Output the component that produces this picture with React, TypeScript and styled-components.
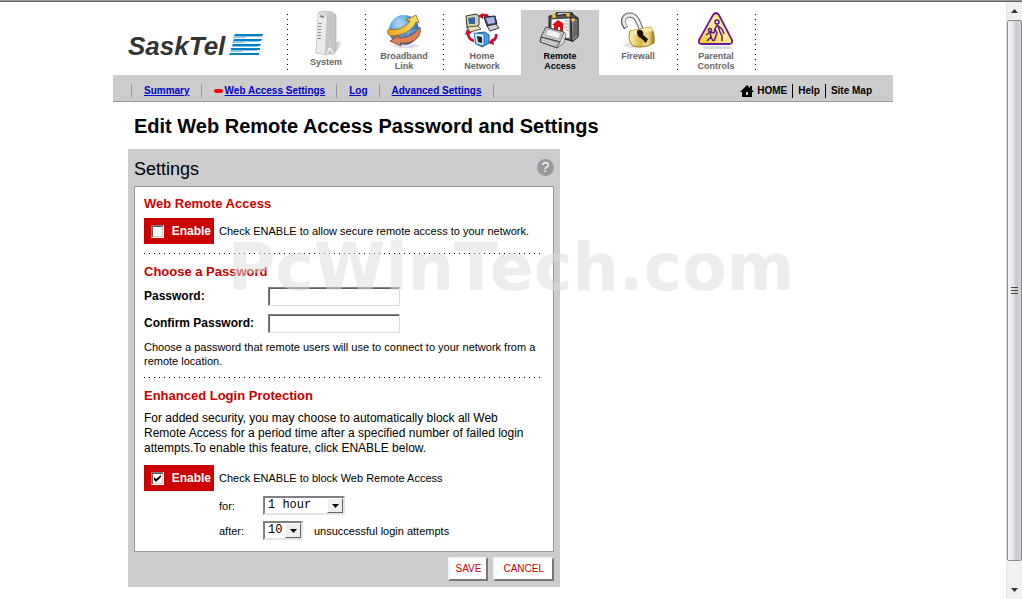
import React from "react";
import styled, { createGlobalStyle } from "styled-components";

const sans = `"Liberation Sans", Arial, sans-serif`;

const GlobalStyle = createGlobalStyle`
  *, *::before, *::after { box-sizing: border-box; }
  body { margin: 0; background: #fff; color: #000; font: 12px/15px ${sans}; }
  h1, h2, h3, p { margin: 0; }
`;

const Frame = styled.div`
  position: relative;
  display: grid;
  grid-template-columns: minmax(0, 1fr) 16px;
  min-height: 100vh;
  border-top: 1px solid #999;
  box-shadow: inset 0 1px 0 #666;
`;

const Page = styled.div`
  width: 100%;
  max-width: 780px;
  margin: 0 auto;
  padding-top: 9px;
`;

const Header = styled.header`
  display: flex;
  justify-content: space-between;
  padding-right: 138px;
`;

const Brand = styled.a`
  display: block;
  padding: 22px 0 0 14px;
`;

const Tabs = styled.nav`
  display: flex;
`;

const dotsDown = `repeating-linear-gradient(to bottom, #000 0 1px, transparent 1px 5px)`;

const Tab = styled.a<{ $active?: boolean; $plain?: boolean; $last?: boolean }>`
  position: relative;
  display: flex;
  flex-direction: column;
  align-items: center;
  width: 78px;
  height: 65px;
  background: ${(p) => (p.$active ? "#ccc" : "transparent")};
  color: ${(p) => (p.$active ? "#000" : "#666")};
  font: bold 9px/10px ${sans};
  text-align: center;
  text-decoration: none;

  &::before, &::after {
    content: "";
    position: absolute;
    top: 4px;
    width: 1px;
    height: 56px;
  }
  &::before {
    left: 0;
    background: ${(p) => (p.$active || p.$plain ? "none" : dotsDown)};
  }
  &::after {
    right: -1px;
    background: ${(p) => (p.$last ? dotsDown : "none")};
  }
`;

const TabLabel = styled.span`
  width: 50px;
`;

const SubBar = styled.div`
  display: flex;
  align-items: center;
  justify-content: space-between;
  height: 27px;
  padding: 5px 21px 0 18px;
  background: #ccc;
  border-bottom: 1px solid #999;
  font: bold 10px/14px ${sans};
`;

const SubList = styled.ul`
  display: flex;
  margin: 0;
  padding: 0;
  list-style: none;
`;

const SubItem = styled.li`
  display: flex;
  align-items: center;
  gap: 2px;
  padding: 0 11px 0 12px;
  border-left: 1px solid #999;
  &:last-child { border-right: 1px solid #999; }
`;

const SubLink = styled.a`
  color: #0000cc;
`;

const CurrentMark = styled.i`
  width: 9px;
  height: 4px;
  border-radius: 2px;
  background: #f00;
`;

const Utility = styled.nav`
  display: flex;
`;

const UtilityLink = styled.a`
  display: flex;
  align-items: center;
  gap: 3px;
  padding: 0 5px;
  color: #000;
  text-decoration: none;
  & + & { border-left: 1px solid #000; }
  &:last-child { padding-right: 0; }
`;

const Title = styled.h1`
  padding: 10px 0 9px 21px;
  font: bold 20px/28px ${sans};
`;

const Panel = styled.form`
  width: 432px;
  max-width: 100%;
  margin-left: 15px;
  padding: 0 6px 6px;
  background: #ccc;
`;

const PanelHead = styled.div`
  display: flex;
  align-items: center;
  justify-content: space-between;
  height: 37px;
`;

const PanelTitle = styled.h2`
  padding-top: 2px;
  font: 18px/24px ${sans};
`;

const HelpButton = styled.button`
  width: 17px;
  height: 17px;
  padding: 0;
  border: 0;
  border-radius: 50%;
  background: #999;
  color: #fff;
  font: 14px/17px ${sans};
`;

const PanelBody = styled.div`
  padding: 8px 12px 10px 9px;
  background: #fff;
  border: 1px solid #999;
`;

const SectionTitle = styled.h3`
  color: #c00;
  font: bold 13px/18px ${sans};
`;

const Rule = styled.hr`
  height: 1px;
  margin: 9px 0;
  border: 0;
  background: repeating-linear-gradient(to right, #000 0 1px, transparent 1px 5px);
`;

const EnableRow = styled.div`
  display: flex;
  align-items: center;
  gap: 5px;
  margin-top: 5px;
  font-size: 11px;
`;

const EnableBox = styled.label`
  display: flex;
  align-items: center;
  justify-content: space-between;
  width: 70px;
  height: 26px;
  padding: 0 3px 0 7px;
  background: #c00;
  color: #fff;
  font: bold 12px/15px ${sans};
`;

const Check = styled.input`
  appearance: none;
  width: 13px;
  height: 13px;
  margin: 0;
  border: 1px solid;
  border-color: #808080 #fff #fff #808080;
  background: #fff;
  box-shadow: inset 1px 1px 0 #606060, inset -1px -1px 0 #d4d0c8;
  &:checked {
    background: #fff url("data:image/svg+xml,%3Csvg xmlns='http://www.w3.org/2000/svg' viewBox='0 0 11 11'%3E%3Cpath d='M2 4v3l2 2 5-5V2L4 6z'/%3E%3C/svg%3E") center / 11px 11px no-repeat;
  }
`;

const Fields = styled.div`
  display: grid;
  gap: 8px;
  padding-top: 6px;
`;

const Field = styled.div`
  display: flex;
  align-items: center;
  height: 19px;
`;

const FieldLabel = styled.label`
  width: 124px;
  font-weight: bold;
`;

const TextBox = styled.input`
  width: 132px;
  height: 19px;
  padding: 1px 3px;
  border: 1px solid;
  border-color: #808080 #ddd #ddd #808080;
  background: #fff;
  box-shadow: inset 1px 1px 0 #606060;
  font: 12px/15px ${sans};
`;

const Hint = styled.p`
  margin-top: 7px;
  font-size: 11px;
  line-height: 14px;
`;

const Copy = styled.p`
  margin: 6px 0 9px;
`;

const OptionRow = styled.div`
  display: flex;
  align-items: center;
  height: 20px;
  margin-top: 5px;
  padding-left: 75px;
  font-size: 11px;
`;

const OptionLabel = styled.label`
  width: 44px;
`;

const SelectWrap = styled.span<{ $width: number }>`
  position: relative;
  width: ${(p) => p.$width}px;
  height: 20px;
  margin-right: 11px;
`;

const SelectBox = styled.select`
  appearance: none;
  width: 100%;
  height: 19px;
  padding: 0 0 0 3px;
  border: 2px solid;
  border-color: #808080 #e4e4e4 #e4e4e4 #808080;
  border-radius: 0;
  background: #fff;
  color: #000;
  font: 12px/15px "Liberation Mono", monospace;
`;

const Arrow = styled.span`
  position: absolute;
  top: 2px;
  right: 2px;
  display: grid;
  place-items: center;
  width: 16px;
  height: 15px;
  background: #eee;
  border: 1px solid;
  border-color: #fff #666 #666 #fff;
  pointer-events: none;
`;

const Actions = styled.div`
  display: flex;
  justify-content: flex-end;
  gap: 5px;
  padding-top: 5px;
`;

const ActionButton = styled.button`
  height: 24px;
  padding: 0 5px;
  border: 2px solid;
  border-color: #f4f4f4 #777 #777 #f4f4f4;
  background: #fff;
  color: #c00;
  font: 10px/18px ${sans};
  &:last-child { padding: 0 8px; }
`;

const Watermark = styled.div`
  position: absolute;
  top: 230px;
  left: 0;
  right: 0;
  text-align: center;
  color: rgba(220, 220, 220, 0.5);
  font: bold 65px/74px "DejaVu Sans", sans-serif;
  pointer-events: none;
`;

const ScrollTrack = styled.div`
  display: flex;
  flex-direction: column;
  margin-top: 1px;
  background: #f0f0f0;
  border-left: 1px solid #e4e4e4;
`;

const ScrollArrow = styled.span`
  display: grid;
  place-items: center;
  height: 18px;
`;

const ScrollThumb = styled.span`
  display: grid;
  place-items: center;
  flex: 1;
  margin-bottom: 20px;
  border: 1px solid #8c8c8c;
  border-radius: 2px;
  background: linear-gradient(to right, #f4f4f4, #e6e6e8 40%, #c8c8ce 60%, #d2d2d8);
`;

const Logo = () => (
  <svg width="138" height="30" viewBox="0 0 138 30" role="img" aria-label="SaskTel">
    <text x="1" y="23" fill="#333" fontFamily="Liberation Sans, Arial, sans-serif" fontSize="26" fontWeight="bold" fontStyle="italic">SaskTel</text>
    <path fill="#0080c4" d="M108 2h28v1l-1 1h-28zM107 7h28l-1 2h-28zM106 12h28l-1 2h-28zM104 16h29v2h-29zM103 21h29v2h-30z" />
    <path fill="#0080c4" d="M120 4h15v1h-15zM118 9h14v1h-14zM117 14h14v1h-14zM116 18h14v1h-14z" opacity=".45" />
    <path fill="#8cc8e6" d="M107 4h14l-3 2h-12zM106 9h14l-3 2h-12zM105 14h14l-3 1h-12zM104 18h14l-3 2h-12z" />
  </svg>
);

const SystemIcon = () => (
  <svg width="36" height="47" viewBox="0 0 36 47">
    <defs>
      <linearGradient id="router" x1="0" x2="1"><stop offset="0" stopColor="#f0f0f0" /><stop offset="1" stopColor="#bbb" /></linearGradient>
      <linearGradient id="shade" x1="0" x2="1"><stop offset="0" stopColor="#aaa" /><stop offset="1" stopColor="#fff" /></linearGradient>
    </defs>
    <path d="M24 43l2-10 6-2 3 2-7 9z" fill="url(#shade)" />
    <path d="M11 2q6-2 13 0l4 3v36l-5 3-15-1z" fill="url(#router)" stroke="#b4b4b4" strokeWidth=".7" />
    <path d="M19 3l6 0q2 1 2 3v34l-6 4h-3z" fill="#c6c6c6" />
    <path d="M10 3l8 2q1 1 1 3l-2 37-9-3z" fill="#ececec" stroke="#bcbcbc" strokeWidth=".6" />
    <path d="M12 6l4 1" stroke="#888" strokeWidth="2" />
    <path d="M12 13l-1 17" stroke="#888" strokeWidth="3" strokeDasharray="1 2" />
    <path d="M17 44l4-8 2 1 4 6-2 2-3-4-3 4z" fill="#eaeaea" stroke="#aaa" strokeWidth=".7" />
  </svg>
);

const BroadbandIcon = () => (
  <svg width="36" height="36" viewBox="0 0 36 36">
    <defs>
      <radialGradient id="globe" cx=".35" cy=".3" r=".8"><stop offset="0" stopColor="#bfe4fb" /><stop offset=".5" stopColor="#4a98dd" /><stop offset="1" stopColor="#1a4f9c" /></radialGradient>
      <linearGradient id="gold" x1="0" x2="1"><stop offset="0" stopColor="#e8a020" /><stop offset="1" stopColor="#ffe66a" /></linearGradient>
    </defs>
    <ellipse cx="20" cy="33" rx="13" ry="2" fill="#dde" />
    <circle cx="18" cy="17" r="15" fill="url(#globe)" />
    <path d="M6 8q12 6 24 0M3 16q14 8 30 0M18 2q-11 14-1 30M18 2q10 14 0 30" fill="none" stroke="#8cc4ee" strokeWidth=".7" />
    <path d="M3 16c-3 3-1 7 3 7 10 0 21-6 24-14l3 1-3-8-10 5 4 1C20 14 12 18 3 16z" fill="url(#gold)" stroke="#8c5a10" strokeWidth=".8" />
    <path d="M34 14c2 9-5 15-13 16l-7 0 1 3-11-5 9-6 0 3c9 0 16-4 21-11z" fill="#dc8058" stroke="#7c3a20" strokeWidth=".8" />
  </svg>
);

const NetworkIcon = () => (
  <svg width="36" height="36" viewBox="0 0 36 36">
    <g fill="none" stroke="#cc0a2c" strokeWidth="2.6">
      <path d="M17 3q4-2 7 0M4 20q0 6 6 8M32 21q1 6-5 7" />
    </g>
    <path d="M14 3l5-3v6zM1 22l2-6 5 4zM30 32l-6-2 5-5z" fill="#cc0a2c" />
    <path d="M2 3l10-2 3 2v9l-4 3H3z" fill="#d8d2a8" stroke="#333" />
    <path d="M4 5l7-1v7H5z" fill="#3864a8" />
    <path d="M3 14l11-1 3 3-11 3z" fill="#e8e2b8" stroke="#333" strokeWidth=".8" />
    <path d="M20 4l11-1 2 8-10 2z" fill="#444c70" stroke="#222" />
    <path d="M22 5l8-1 1 6-7 1z" fill="#a8b8e0" />
    <path d="M23 13l9-2 3 4-9 3z" fill="#c8ccd8" stroke="#222" strokeWidth=".9" />
    <path d="M13 20l8-1 4 3v8l-7 4-7-4z" fill="#48a0e0" stroke="#1a5a98" />
    <path d="M10 20l10 1v12l-8-2z" fill="#d4eeff" stroke="#2474b8" />
    <path d="M13 23l5 1v6l-4-1z" fill="#223" />
  </svg>
);

const RemoteIcon = () => (
  <svg width="42" height="37" viewBox="0 0 42 37">
    <path d="M16 3l3-3h13l2 3" fill="none" stroke="#222" strokeWidth="1.6" />
    <path d="M10 4l23-2 6 4v18l-5 5-24-5z" fill="#555" stroke="#1a1a1a" />
    <path d="M32 5l7 2v18l-6 5z" fill="#8c8c8c" stroke="#222" />
    <path d="M35 8v18M37 8v16" stroke="#444" />
    <circle cx="15" cy="4" r="2" fill="#f5c030" /><circle cx="34" cy="8" r="1.800" fill="#f5c030" /><circle cx="29" cy="3" r="1.800" fill="#f5c030" />
    <path d="M12 7l19-1v21l-19-4z" fill="#f4f4f4" stroke="#333" strokeWidth=".8" />
    <path d="M13 13l6-5 6 4-1 1v6h-3v-4h-2v4h-4v-6z" fill="#e00a14" />
    <path d="M26 9h4M26 12h4M26 15h4M26 18h4" stroke="#aaa" />
    <path d="M7 15l18 5-3 10-20-5z" fill="#ccc" stroke="#444" />
    <path d="M9 17l13 4-2 6-14-4z" fill="#f0f0f0" stroke="#888" strokeWidth=".6" />
    <path d="M2 25l19 5-3 6-17-6z" fill="#b4b4b4" stroke="#444" />
    <path d="M4 27l13 5M3 29l12 4" stroke="#eee" strokeDasharray="2 1" />
    <path d="M21 30l4-10 2 2-2 9-7 5z" fill="#ddd" stroke="#555" strokeWidth=".7" />
  </svg>
);

const FirewallIcon = () => (
  <svg width="36" height="37" viewBox="0 0 36 37">
    <defs>
      <linearGradient id="brass" x1="0" x2="1"><stop offset="0" stopColor="#fff6c0" /><stop offset=".45" stopColor="#d9b546" /><stop offset=".75" stopColor="#f5e398" /><stop offset="1" stopColor="#9c7418" /></linearGradient>
    </defs>
    <ellipse cx="14" cy="33" rx="11" ry="3" fill="#e4e4e4" />
    <path d="M6 16C0 8 5 3 10 3c6 0 8 6 11 14" fill="none" stroke="#666" strokeWidth="5" />
    <path d="M6 15C1 8 5 3 10 3c6 0 8 6 11 14" fill="none" stroke="#e8e8e8" strokeWidth="3" />
    <path d="M10 19l21-4q4 6 3 16-10 6-21 3-6-6-3-15z" fill="url(#brass)" stroke="#9a7a28" />
    <path d="M10 19l21-4 2 4-21 4z" fill="#f8e9a6" />
    <path d="M18 18c4-1 6 2 5 5l5 4-2 4-5-5c-4-1-5-7-3-8z" fill="#181008" />
  </svg>
);

const ParentalIcon = () => (
  <svg width="36" height="37" viewBox="0 0 36 37">
    <defs>
      <linearGradient id="sign" x1="0" y1="1" x2="1" y2="0"><stop offset="0" stopColor="#f0cc28" /><stop offset=".6" stopColor="#fff0a0" /><stop offset="1" stopColor="#eec020" /></linearGradient>
    </defs>
    <path d="M4 34h28l3 3H6z" fill="#ddd" />
    <path d="M15 3q3-4 6 0l13 25q1 4-3 4H4q-4 0-3-4z" fill="url(#sign)" stroke="#6a1a96" strokeWidth="1.8" />
    <g fill="none" stroke="#5a1a8c" strokeWidth="1.500">
      <circle cx="19" cy="10" r="2" /><circle cx="12" cy="18" r="1.600" />
      <path d="M19 13l-2 4 2 4-3 8M19 13l5 4 2 5M20 14l2 6 2 4v5M17 17l-1 4M12 20l-4 3M12 20l1 5-4 4M13 25l2 4M12 20l4 1" />
    </g>
  </svg>
);

const HomeIcon = () => (
  <svg width="14" height="12" viewBox="0 0 14 12">
    <path d="M7 0l3 3V1h2v4l2 2h-2v5H2V7H0zM6 7v3h2V7z" fill="#000" fillRule="evenodd" />
  </svg>
);

const DownTriangle = () => (
  <svg width="7" height="4" viewBox="0 0 7 4"><path d="M0 0h7L3.500 4z" /></svg>
);

const tabs = [
  { label: "System", Icon: SystemIcon },
  { label: "Broadband Link", Icon: BroadbandIcon },
  { label: "Home Network", Icon: NetworkIcon },
  { label: "Remote Access", Icon: RemoteIcon, active: true },
  { label: "Firewall", Icon: FirewallIcon, plain: true },
  { label: "Parental Controls", Icon: ParentalIcon },
];

const IconSlot = styled.span<{ $tall?: boolean }>`
  display: flex;
  align-items: flex-end;
  height: ${(p) => (p.$tall ? 47 : 41)}px;
  padding-bottom: ${(p) => (p.$tall ? 0 : 2)}px;
  svg { display: block; }
`;

const subItems = ["Summary", "Web Access Settings", "Log", "Advanced Settings"];

export default function App() {
  return (
    <>
      <GlobalStyle />
      <Frame>
        <Page>
          <Header>
            <Brand href="#"><Logo /></Brand>
            <Tabs>
              {tabs.map(({ label, Icon, active, plain }, i) => (
                <Tab key={label} href="#" $active={active} $plain={plain} $last={i === tabs.length - 1}>
                  <IconSlot $tall={i === 0}><Icon /></IconSlot>
                  <TabLabel>{label}</TabLabel>
                </Tab>
              ))}
            </Tabs>
          </Header>
          <SubBar>
            <SubList>
              {subItems.map((item) => (
                <SubItem key={item}>
                  {item === "Web Access Settings" && <CurrentMark />}
                  <SubLink href="#">{item}</SubLink>
                </SubItem>
              ))}
            </SubList>
            <Utility>
              <UtilityLink href="#"><HomeIcon />HOME</UtilityLink>
              <UtilityLink href="#">Help</UtilityLink>
              <UtilityLink href="#">Site Map</UtilityLink>
            </Utility>
          </SubBar>
          <main>
            <Title>Edit Web Remote Access Password and Settings</Title>
            <Panel onSubmit={(e) => e.preventDefault()}>
              <PanelHead>
                <PanelTitle>Settings</PanelTitle>
                <HelpButton type="button">?</HelpButton>
              </PanelHead>
              <PanelBody>
                <SectionTitle>Web Remote Access</SectionTitle>
                <EnableRow>
                  <EnableBox><Check type="checkbox" />Enable</EnableBox>
                  <span>Check ENABLE to allow secure remote access to your network.</span>
                </EnableRow>
                <Rule />
                <SectionTitle>Choose a Password</SectionTitle>
                <Fields>
                  <Field>
                    <FieldLabel htmlFor="password">Password:</FieldLabel>
                    <TextBox id="password" type="password" />
                  </Field>
                  <Field>
                    <FieldLabel htmlFor="confirm">Confirm Password:</FieldLabel>
                    <TextBox id="confirm" type="password" />
                  </Field>
                </Fields>
                <Hint>Choose a password that remote users will use to connect to your network from a remote location.</Hint>
                <Rule />
                <SectionTitle>Enhanced Login Protection</SectionTitle>
                <Copy>
                  For added security, you may choose to automatically block all Web Remote Access for a
                  period time after a specified number of failed login attempts.To enable this feature,
                  click ENABLE below.
                </Copy>
                <EnableRow>
                  <EnableBox><Check type="checkbox" defaultChecked />Enable</EnableBox>
                  <span>Check ENABLE to block Web Remote Access</span>
                </EnableRow>
                <OptionRow>
                  <OptionLabel htmlFor="duration">for:</OptionLabel>
                  <SelectWrap $width={82}>
                    <SelectBox id="duration"><option>1 hour</option></SelectBox>
                    <Arrow><DownTriangle /></Arrow>
                  </SelectWrap>
                </OptionRow>
                <OptionRow>
                  <OptionLabel htmlFor="attempts">after:</OptionLabel>
                  <SelectWrap $width={40}>
                    <SelectBox id="attempts"><option>10</option></SelectBox>
                    <Arrow><DownTriangle /></Arrow>
                  </SelectWrap>
                  <span>unsuccessful login attempts</span>
                </OptionRow>
              </PanelBody>
              <Actions>
                <ActionButton type="submit">SAVE</ActionButton>
                <ActionButton type="button">CANCEL</ActionButton>
              </Actions>
            </Panel>
          </main>
        </Page>
        <ScrollTrack aria-hidden="true">
          <ScrollArrow><svg width="7" height="4" viewBox="0 0 7 4"><path d="M0 4h7L3.500 0z" fill="#333" /></svg></ScrollArrow>
          <ScrollThumb>
            <svg width="7" height="8" viewBox="0 0 7 8"><path d="M0 0h7v1H0zM0 3h7v1H0zM0 6h7v1H0z" fill="#444" /></svg>
          </ScrollThumb>
          <ScrollArrow><svg width="7" height="4" viewBox="0 0 7 4"><path d="M0 0h7L3.500 4z" fill="#333" /></svg></ScrollArrow>
        </ScrollTrack>
        <Watermark aria-hidden="true">PcWinTech.com</Watermark>
      </Frame>
    </>
  );
}
